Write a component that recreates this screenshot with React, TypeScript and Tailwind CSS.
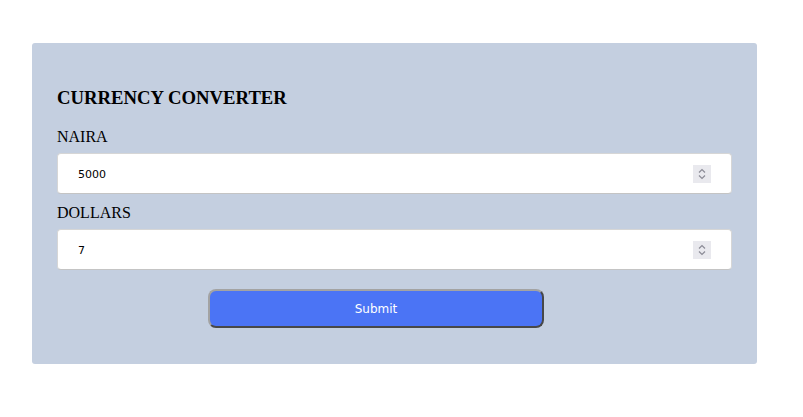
import React from 'react';

// 数字输入框右侧的小箭头（固定绘制，避免依赖 hover 状态）
const Spinner = () => (
  <div className="absolute right-[20px] top-[11px] w-[18px] h-[18px] bg-[#e9e9ee] flex items-center justify-center">
    <svg width="10" height="14" viewBox="0 0 10 14" fill="none">
      <path d="M2 5.5 L5 2.5 L8 5.5" stroke="#8b8b96" strokeWidth="1.2" />
      <path d="M2 8.5 L5 11.5 L8 8.5" stroke="#8b8b96" strokeWidth="1.2" />
    </svg>
  </div>
);

const Field: React.FC<{ label: string; value: string }> = ({ label, value }) => (
  <div className="flex flex-col">
    <label className="h-[20px] leading-[20px] text-[16px] text-black font-['Liberation_Serif',serif]">
      {label}
    </label>
    <div className="relative mt-[6px] h-[41px] bg-white rounded-[4px] border border-[#d6d6d6] border-b-[#c4c4c4]">
      <input
        type="text"
        defaultValue={value}
        className="w-full h-full pl-[20px] pt-[2px] bg-transparent outline-none text-[11px] text-black font-['DejaVu_Sans',sans-serif]"
      />
      <Spinner />
    </div>
  </div>
);

export default function App() {
  return (
    <div className="w-[803px] h-[417px] bg-white pt-[43px] pl-[32px]">
      <div className="w-[725px] h-[321px] bg-[#c4cfe0] rounded-[3px] px-[25px] pt-[44px]">
        <h3 className="h-[22px] leading-[22px] text-[18.72px] font-bold text-black font-['Liberation_Serif',serif]">
          CURRENCY CONVERTER
        </h3>
        <div className="mt-[18px] flex flex-col gap-[9px]">
          <Field label="NAIRA" value="5000" />
          <Field label="DOLLARS" value="7" />
        </div>
        <button className="mt-[19px] ml-[151px] w-[336px] h-[39px] rounded-[8px] bg-[#4b74f5] border-2 border-t-[#a3a3a3] border-l-[#a3a3a3] border-b-[#484848] border-r-[#484848] text-white text-[12px] font-['DejaVu_Sans',sans-serif]">
          Submit
        </button>
      </div>
    </div>
  );
}
